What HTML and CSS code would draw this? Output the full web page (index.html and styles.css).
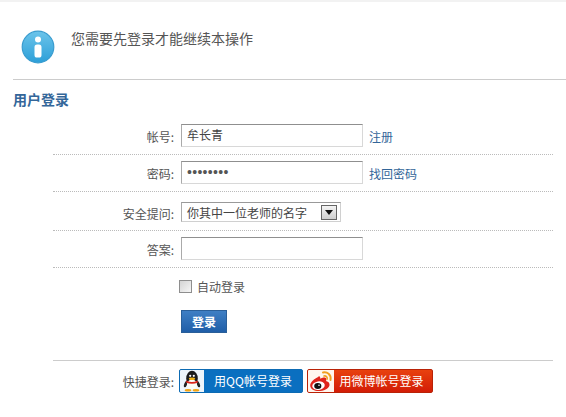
FILE: index.html
```html
<!DOCTYPE html>
<html lang="zh">
<head>
<meta charset="utf-8">
<title>用户登录</title>
<link rel="stylesheet" href="styles.css">
</head>
<body>
<div class="notice">
  <svg class="info" width="34" height="34" viewBox="0 0 34 34">
    <defs>
      <linearGradient id="ig" x1="0" y1="0" x2="0" y2="1">
        <stop offset="0" stop-color="#6cc4ea"/>
        <stop offset="1" stop-color="#2c9fd8"/>
      </linearGradient>
    </defs>
    <circle cx="17" cy="17" r="15.800" fill="url(#ig)" stroke="#3a9ccf" stroke-width="1.200"/>
    <circle cx="17" cy="9.500" r="3" fill="#fff"/>
    <rect x="13.500" y="14.500" width="7" height="13" rx="2.600" fill="#fff"/>
  </svg>
  <p class="notice-text">您需要先登录才能继续本操作</p>
</div>
<div class="panel">
  <h2 class="panel-title">用户登录</h2>
  <form class="form">
    <div class="row">
      <span class="label">帐号:</span>
      <span class="input">牟长青</span>
      <a class="link">注册</a>
    </div>
    <div class="row">
      <span class="label">密码:</span>
      <span class="input dots">••••••••</span>
      <a class="link">找回密码</a>
    </div>
    <div class="row row-select">
      <span class="label">安全提问:</span>
      <span class="select">你其中一位老师的名字
        <span class="arrow"><svg width="8" height="5" viewBox="0 0 8 5"><path d="M0 0h8L4 5z" fill="#111"/></svg></span>
      </span>
    </div>
    <div class="row">
      <span class="label">答案:</span>
      <span class="input"></span>
    </div>
    <div class="auto">
      <span class="check"></span>
      <span>自动登录</span>
    </div>
    <div class="submit-wrap"><span class="submit">登录</span></div>
    <div class="quick">
      <span class="quick-label">快捷登录:</span>
      <a class="btn-qq">
        <span class="qq-icon">
          <svg width="20" height="22" viewBox="0 0 20 22">
            <ellipse cx="10" cy="8.500" rx="5.800" ry="7.800" fill="#1c1c1c"/>
            <ellipse cx="3.800" cy="14" rx="1.500" ry="3.400" fill="#222" transform="rotate(22 3.800 14)"/>
            <ellipse cx="16.200" cy="14" rx="1.500" ry="3.400" fill="#222" transform="rotate(-22 16.200 14)"/>
            <ellipse cx="10" cy="14.500" rx="5" ry="5" fill="#fbfbf6"/>
            <path d="M4.500 10.500q5.500 3 11 0l.5 2q-6 2.500-12 0z" fill="#d9241c"/>
            <ellipse cx="10" cy="8.800" rx="3.200" ry="1.200" fill="#f2b416"/>
            <circle cx="8.200" cy="5.800" r="1.100" fill="#fff"/>
            <circle cx="11.800" cy="5.800" r="1.100" fill="#fff"/>
            <ellipse cx="6" cy="20.300" rx="3.300" ry="1.300" fill="#f2a516"/>
            <ellipse cx="14" cy="20.300" rx="3.300" ry="1.300" fill="#f2a516"/>
          </svg>
        </span>
        <span class="qq-text">用QQ帐号登录</span>
      </a>
      <a class="btn-weibo">
        <span class="wb-icon">
          <svg width="25" height="22" viewBox="0 0 25 22">
            <path d="M10 6.500C5 8.800 1 12.500 1.200 15.800c.3 3.700 5 5.700 10 5.200 5.500-.5 9.500-3.500 9.300-6.600-.1-1.900-1.900-2.900-3.500-3.300.7-1.500.6-2.900-.6-3.400-1.500-.6-3.800.2-5.300 1 .4-1.500-.1-3.100-2.100-2.200z" fill="#e0241c"/>
            <ellipse cx="9.500" cy="15.700" rx="6.300" ry="4.300" fill="#fff" transform="rotate(-8 9.500 15.700)"/>
            <ellipse cx="8.800" cy="16" rx="3.600" ry="3" fill="#111"/>
            <circle cx="10" cy="15.200" r=".8" fill="#fff"/>
            <path d="M14 2.500c4-1 8.500 2 7.500 7.500" fill="none" stroke="#f0a020" stroke-width="2" stroke-linecap="round"/>
            <path d="M15 6c2-.4 3.600 1 3.200 3" fill="none" stroke="#f0a020" stroke-width="1.600" stroke-linecap="round"/>
          </svg>
        </span>
        <span class="wb-text">用微博帐号登录</span>
      </a>
    </div>
  </form>
</div>
</body>
</html>
```

FILE: styles.css
```css
* { box-sizing: border-box; }
html, body { margin: 0; padding: 0; }
body {
  width: 566px;
  height: 417px;
  overflow: hidden;
  background: #fff;
  border-top: 2px solid #f2f2f2;
  font-family: "Noto Sans CJK SC", "Liberation Sans", sans-serif;
  font-size: 12px;
  color: #555;
}
.notice {
  display: flex;
  align-items: flex-start;
  height: 78px;
  margin-left: 13px;
  padding: 28px 0 0 8px;
  border-bottom: 1px solid #ccc;
}
.info { flex: none; }
.notice-text { margin: -1px 0 0 16px; font-size: 14px; line-height: 18px; color: #555; }
.panel { padding-left: 13px; }
.panel-title {
  margin: 10px 0 0;
  font-size: 14px;
  line-height: 18px;
  font-weight: 700;
  color: #336699;
}
.form { margin: 0 13px 0 40px; }
.row {
  display: flex;
  align-items: center;
  height: 37px;
  padding-bottom: 1px;
  border-bottom: 1px dotted #bbb;
}
.row:first-child { margin-top: 10px; }
.row-select { height: 39px; padding: 2px 0 0; }
.label {
  width: 122px;
  flex: none;
  padding: 2px 1px 0 0;
  text-align: right;
  color: #555;
}
.input {
  display: block;
  flex: none;
  width: 182px;
  height: 23px;
  margin-left: 6px;
  padding: 0 0 0 5px;
  line-height: 20px;
  border: 1px solid #d8d8d8;
  border-top-color: #8f8f8f;
  border-left-color: #aaa;
  background: #fff;
  color: #444;
}
.dots { font-family: "Liberation Sans", sans-serif; font-size: 14px; letter-spacing: .3px; line-height: 20px; color: #555; }
.link { margin-left: 6px; padding-top: 2px; color: #336699; }
.select {
  display: flex;
  align-items: center;
  flex: none;
  justify-content: space-between;
  width: 160px;
  height: 20px;
  margin-left: 6px;
  padding: 0 3px 0 5px;
  border: 1px solid #d0d0d0;
  border-top-color: #999;
  border-left-color: #aaa;
  color: #444;
}
.arrow {
  display: flex;
  align-items: center;
  justify-content: center;
  width: 16px;
  height: 15px;
  border: 1px solid #666;
  background: linear-gradient(#f4f4f4, #cfcfcf);
}
.auto {
  display: flex;
  align-items: center;
  gap: 5px;
  height: 18px;
  margin: 9px 0 0 126px;
}
.check {
  width: 13px;
  height: 13px;
  border: 1px solid #8e8e8e;
  background: linear-gradient(135deg, #d4d4d4, #f6f6f6);
}
.submit-wrap { margin: 15px 0 0 128px; }
.submit {
  display: block;
  width: 46px;
  height: 23px;
  line-height: 22px;
  text-align: center;
  font-weight: 700;
  color: #fff;
  background: linear-gradient(#3f7fc4, #1f5ea8);
  border: 1px solid #2a5f99;
}
.quick {
  display: flex;
  align-items: center;
  height: 33px;
  margin-top: 27px;
  padding-top: 8px;
  border-top: 1px solid #ccc;
}
.quick-label { width: 122px; flex: none; padding-right: 1px; text-align: right; color: #555; }
.btn-qq, .btn-weibo {
  display: flex;
  flex: none;
  height: 24px;
  border-radius: 2px;
  overflow: hidden;
  color: #fff;
}
.btn-qq { width: 124px; margin-left: 4px; background: #0a6fc0; border: 1px solid #0d6bb3; }
.qq-icon {
  display: flex;
  align-items: center;
  justify-content: center;
  width: 24px;
  background: #eef5fb;
}
.qq-text { flex: 1; text-align: center; line-height: 21px; }
.btn-weibo {
  width: 126px;
  margin-left: 4px;
  background: linear-gradient(#e8410f, #d31c06);
  border: 1px solid #b92207;
}
.wb-icon {
  display: flex;
  align-items: center;
  justify-content: center;
  width: 26px;
  background: #fff6ee;
}
.wb-text { flex: 1; padding-right: 3px; text-align: center; line-height: 21px; }
```
